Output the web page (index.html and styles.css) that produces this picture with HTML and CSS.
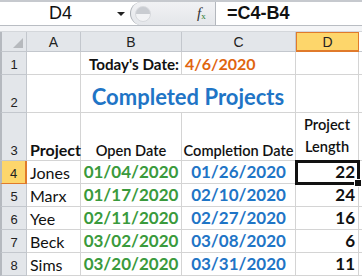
FILE: index.html
```html
<!DOCTYPE html>
<html>
<head>
<meta charset="utf-8">
<link rel="stylesheet" href="styles.css">
</head>
<body>
<div class="fbar">
  <div class="namebox"><span class="ref">D4</span><span class="arrow"></span></div>
  <div class="mid">
    <div class="pill"><span class="knob"></span></div>
    <span class="fx"><i>f</i><sub>x</sub></span>
  </div>
  <div class="formula">=C4-B4</div>
</div>
<div class="gap"></div>
<div class="sheet">
  <div class="corner"><span class="tri"></span></div>
  <div class="ch">A</div>
  <div class="ch">B</div>
  <div class="ch">C</div>
  <div class="ch sel">D</div>
  <div class="ch rest"></div>

  <div class="rh">1</div>
  <div class="c"></div>
  <div class="c right bold">Today's Date:</div>
  <div class="c orange bold">4/6/2020</div>
  <div class="c"></div>
  <div class="c rest"></div>

  <div class="rh">2</div>
  <div class="c"></div>
  <div class="c span2 title">Completed Projects</div>
  <div class="c"></div>
  <div class="c rest"></div>

  <div class="rh">3</div>
  <div class="c bottom bold">Project</div>
  <div class="c bottom center head">Open Date</div>
  <div class="c bottom center head">Completion Date</div>
  <div class="c bottom center head two">Project<br>Length</div>
  <div class="c rest"></div>

  <div class="rh sel">4</div>
  <div class="c name">Jones</div>
  <div class="c center green">01/04/2020</div>
  <div class="c center blue">01/26/2020</div>
  <div class="c num active">22<span class="handle"></span></div>
  <div class="c rest"></div>

  <div class="rh">5</div>
  <div class="c name">Marx</div>
  <div class="c center green">01/17/2020</div>
  <div class="c center blue">02/10/2020</div>
  <div class="c num">24</div>
  <div class="c rest"></div>

  <div class="rh">6</div>
  <div class="c name">Yee</div>
  <div class="c center green">02/11/2020</div>
  <div class="c center blue">02/27/2020</div>
  <div class="c num">16</div>
  <div class="c rest"></div>

  <div class="rh">7</div>
  <div class="c name">Beck</div>
  <div class="c center green">03/02/2020</div>
  <div class="c center blue">03/08/2020</div>
  <div class="c num">6</div>
  <div class="c rest"></div>

  <div class="rh">8</div>
  <div class="c name">Sims</div>
  <div class="c center green">03/20/2020</div>
  <div class="c center blue">03/31/2020</div>
  <div class="c num">11</div>
  <div class="c rest"></div>
</div>
</body>
</html>
```
FILE: styles.css
```css
html, body {
  margin: 0;
  padding: 0;
  background: #ffffff;
  width: 362px;
  height: 277px;
  overflow: hidden;
  font-family: "Lato", "Liberation Sans", sans-serif;
}

.fbar {
  display: flex;
  height: 23px;
  border-top: 2px solid #c6c9ce;
  border-bottom: 1px solid #b9bdc3;
  background: #ffffff;
}
.namebox {
  width: 130px;
  display: flex;
  align-items: center;
  position: relative;
}
.ref {
  font-family: "Liberation Sans", sans-serif;
  font-size: 18px;
  margin-left: 49px;
  color: #111;
}
.arrow {
  position: absolute;
  left: 117px;
  top: 10px;
  width: 0;
  height: 0;
  border-left: 4px solid transparent;
  border-right: 4px solid transparent;
  border-top: 4px solid #222;
}
.mid {
  width: 84px;
  display: flex;
  align-items: center;
  background: linear-gradient(#f1f2f4, #e4e6ea);
  border-left: 1px solid #a9adb3;
  border-radius: 12px 0 0 12px;
  border-right: 1px solid #b3b7bd;
  position: relative;
}
.pill {
  width: 14px;
  height: 14px;
  margin-left: 4px;
  border-radius: 50%;
  background: linear-gradient(#c9ccd1 50%, #f2f3f5 50%);
  border: 1px solid #d7d9dd;
}
.fx {
  margin-left: 46px;
  font-family: "Liberation Serif", serif;
  font-size: 15px;
  color: #333;
}
.fx sub {
  font-size: 9px;
  color: #2e7d32;
  vertical-align: -1px;
}
.formula {
  flex: 1;
  display: flex;
  align-items: center;
  padding-left: 11px;
  font-family: "Liberation Sans", sans-serif;
  font-weight: bold;
  font-size: 18px;
  color: #111;
}

.gap {
  height: 5px;
  border-bottom: 1px solid #d4d7db;
  background: #f4f5f7;
}

.sheet {
  display: grid;
  grid-template-columns: 27px 54px 101px 114px 63px 3px;
  grid-template-rows: 20px 23px 38px 48px 23px 23px 23px 23px 23px;
}

.corner {
  background: #e3e6ea;
  border-right: 1px solid #c3c7cd;
  border-bottom: 1px solid #c3c7cd;
  border-left: 2px solid #b5b9bf;
  position: relative;
}
.tri {
  position: absolute;
  right: 3px;
  bottom: 3px;
  width: 0;
  height: 0;
  border-left: 10px solid transparent;
  border-bottom: 10px solid #b6b9bd;
}
.ch {
  background: #e3e6ea;
  border-right: 1px solid #c3c7cd;
  border-bottom: 1px solid #c3c7cd;
  display: flex;
  align-items: center;
  justify-content: center;
  font-family: "Liberation Sans", sans-serif;
  font-size: 14px;
  color: #222;
}
.ch.sel {
  background: #fdd66b;
  border: 1px solid #e07a2b;
  border-bottom: 2px solid #e07a2b;
}
.ch.rest {
  background: #ffffff;
  border-right: none;
  border-left: none;
}
.rh {
  background: #e3e6ea;
  border-left: 2px solid #b5b9bf;
  border-right: 1px solid #c3c7cd;
  border-bottom: 1px solid #c3c7cd;
  display: flex;
  align-items: flex-end;
  justify-content: center;
  padding-bottom: 2px;
  font-family: "Liberation Sans", sans-serif;
  font-size: 13px;
  color: #222;
}
.rh.sel {
  background: #fdd66b;
  border-right: 2px solid #e07a2b;
  border-bottom: 1px solid #e07a2b;
}

.c {
  border-right: 1px solid #d4d4d4;
  border-bottom: 1px solid #d4d4d4;
  display: flex;
  align-items: flex-end;
  padding: 0 3px 1px 3px;
  font-size: 16px;
  color: #111;
  white-space: nowrap;
  position: relative;
}
.c.rest {
  border-right: none;
  padding: 0;
}
.right { justify-content: flex-end; padding-right: 2px; font-size: 15.2px; }
.center { justify-content: center; }
.bottom { align-items: flex-end; }
.bold { font-weight: bold; }
.orange { color: #e0650f; font-weight: bold; }
.span2 { grid-column: span 2; }
.title {
  justify-content: center;
  align-items: center;
  font-size: 22px;
  font-weight: bold;
  color: #1f75c6;
  padding-top: 6px;
}
.head { font-size: 14.6px; font-weight: 600; }
.two {
  text-align: center;
  line-height: 22px;
  white-space: normal;
  padding-bottom: 2px;
}
.name { font-size: 16px; }
.green { color: #3a9a3c; font-weight: bold; font-size: 17px; }
.blue { color: #1f75c6; font-weight: bold; font-size: 17px; }
.num { justify-content: flex-end; font-weight: bold; font-size: 17px; }
.active {
  outline: 3px solid #111;
  outline-offset: -2px;
  z-index: 2;
}
.handle {
  position: absolute;
  right: -4px;
  bottom: -4px;
  width: 6px;
  height: 6px;
  background: #111;
  border: 1px solid #fff;
}
```
